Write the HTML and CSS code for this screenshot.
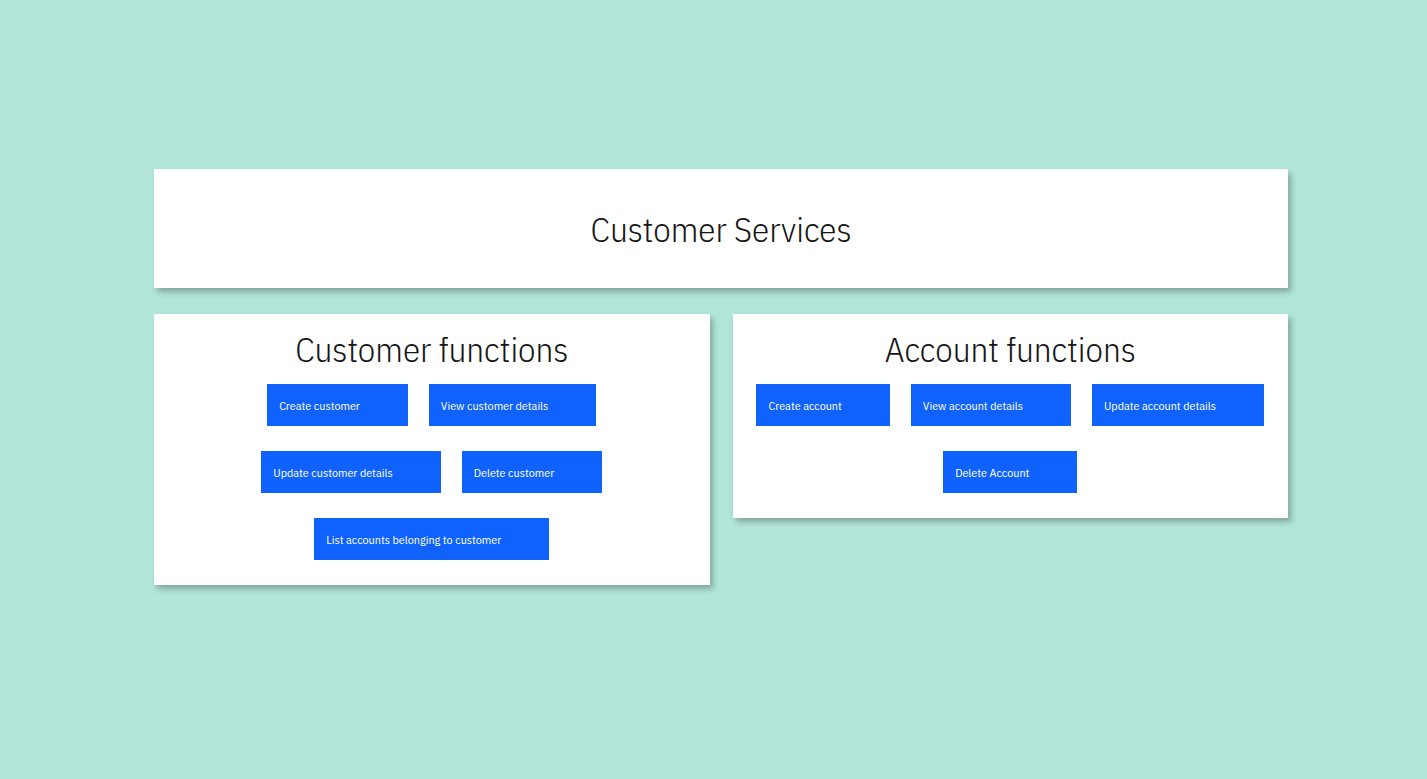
FILE: index.html
```html
<!DOCTYPE html>
<html lang="en">
<head>
<meta charset="utf-8">
<title>Customer Services</title>
<link rel="stylesheet" href="styles.css">
</head>
<body>
<main class="page">
  <header class="card header-card">
    <h1 class="page-title">Customer Services</h1>
  </header>
  <div class="columns">
    <section class="card panel">
      <h2 class="panel-title">Customer functions</h2>
      <div class="actions">
        <button class="btn">Create customer</button>
        <button class="btn">View customer details</button>
        <button class="btn">Update customer details</button>
        <button class="btn">Delete customer</button>
        <button class="btn">List accounts belonging to customer</button>
      </div>
    </section>
    <section class="card panel">
      <h2 class="panel-title">Account functions</h2>
      <div class="actions">
        <button class="btn">Create account</button>
        <button class="btn">View account details</button>
        <button class="btn">Update account details</button>
        <button class="btn">Delete Account</button>
      </div>
    </section>
  </div>
</main>
</body>
</html>
```

FILE: styles.css
```css
html, body {
  margin: 0;
  padding: 0;
}
body {
  background: #b2e6da;
  font-family: "IBM Plex Sans Condensed", "IBM Plex Sans", Roboto, "Liberation Sans", sans-serif;
  color: #161616;
  min-height: 779px;
}
.page {
  width: 1134px;
  margin: 0 0 0 154px;
  padding-top: 169px;
  display: flex;
  flex-direction: column;
  gap: 26px;
}
.card {
  background: #ffffff;
  box-shadow: 3px 4px 6px rgba(0, 0, 0, 0.28);
}
.header-card {
  height: 119px;
  display: flex;
  align-items: center;
  justify-content: center;
}
.page-title {
  margin: 0;
  font-weight: 300;
  font-size: 35px;
  line-height: 44px;
}
.columns {
  display: flex;
  align-items: flex-start;
  gap: 23px;
}
.panel {
  flex: 1 1 0;
  padding: 16px 14px 25px;
  display: flex;
  flex-direction: column;
  align-items: center;
}
.panel-title {
  margin: 0 0 16px;
  font-weight: 300;
  font-size: 35px;
  line-height: 38px;
}
.actions {
  display: flex;
  flex-wrap: wrap;
  justify-content: center;
  column-gap: 21px;
  row-gap: 25px;
  width: 100%;
}
.btn {
  height: 42px;
  padding: 0 48px 0 12px;
  border: 0;
  border-radius: 0;
  background: #0f62fe;
  color: #ffffff;
  font-family: inherit;
  font-size: 12px;
  text-align: left;
  cursor: pointer;
}
```
